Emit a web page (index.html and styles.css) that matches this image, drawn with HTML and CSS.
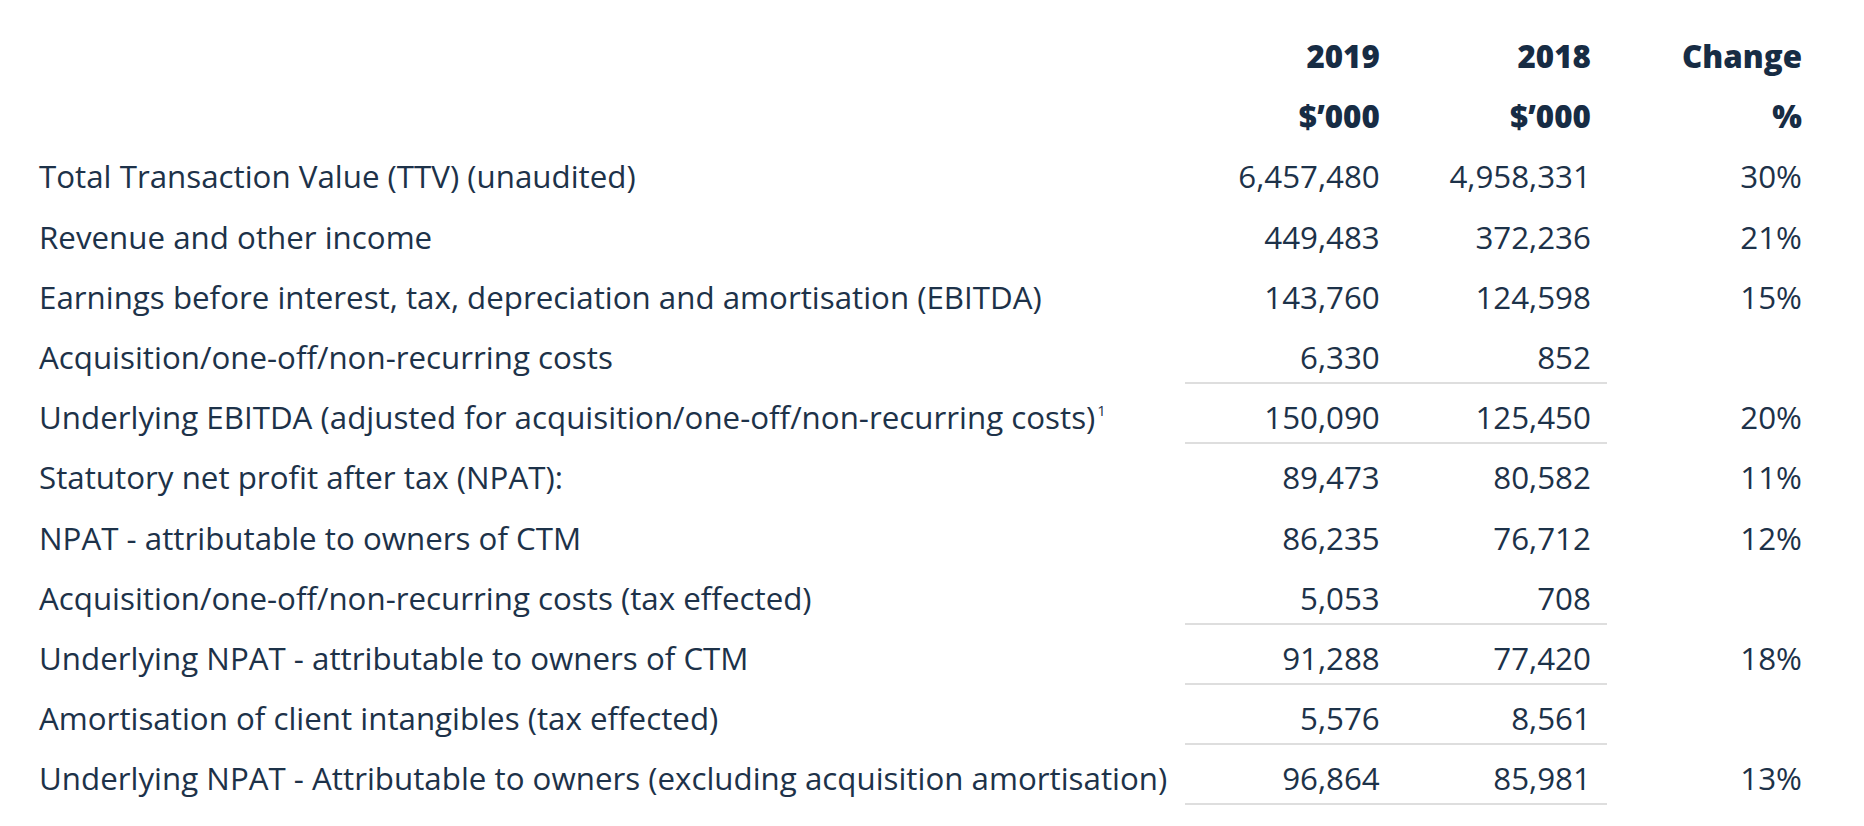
FILE: index.html
```html
<!DOCTYPE html>
<html lang="en">
<head>
<meta charset="utf-8">
<title>Financial results</title>
<link rel="stylesheet" href="styles.css">
</head>
<body>
<div class="page">
  <table class="results">
    <colgroup>
      <col class="c-label">
      <col class="c-num">
      <col class="c-num">
      <col class="c-num">
    </colgroup>
    <thead>
      <tr>
        <th class="label"></th>
        <th class="num">2019</th>
        <th class="num">2018</th>
        <th class="num">Change</th>
      </tr>
      <tr>
        <th class="label"></th>
        <th class="num">$’000</th>
        <th class="num">$’000</th>
        <th class="num">%</th>
      </tr>
    </thead>
    <tbody>
      <tr>
        <td class="label">Total Transaction Value (TTV) (unaudited)</td>
        <td class="num">6,457,480</td>
        <td class="num">4,958,331</td>
        <td class="num">30%</td>
      </tr>
      <tr>
        <td class="label">Revenue and other income</td>
        <td class="num">449,483</td>
        <td class="num">372,236</td>
        <td class="num">21%</td>
      </tr>
      <tr>
        <td class="label">Earnings before interest, tax, depreciation and amortisation (EBITDA)</td>
        <td class="num">143,760</td>
        <td class="num">124,598</td>
        <td class="num">15%</td>
      </tr>
      <tr class="ruled">
        <td class="label">Acquisition/one-off/non-recurring costs</td>
        <td class="num">6,330</td>
        <td class="num">852</td>
        <td class="num"></td>
      </tr>
      <tr class="ruled">
        <td class="label">Underlying EBITDA (adjusted for acquisition/one-off/non-recurring costs)<sup class="note">1</sup></td>
        <td class="num">150,090</td>
        <td class="num">125,450</td>
        <td class="num">20%</td>
      </tr>
      <tr>
        <td class="label">Statutory net profit after tax (NPAT):</td>
        <td class="num">89,473</td>
        <td class="num">80,582</td>
        <td class="num">11%</td>
      </tr>
      <tr>
        <td class="label">NPAT - attributable to owners of CTM</td>
        <td class="num">86,235</td>
        <td class="num">76,712</td>
        <td class="num">12%</td>
      </tr>
      <tr class="ruled">
        <td class="label">Acquisition/one-off/non-recurring costs (tax effected)</td>
        <td class="num">5,053</td>
        <td class="num">708</td>
        <td class="num"></td>
      </tr>
      <tr class="ruled">
        <td class="label">Underlying NPAT - attributable to owners of CTM</td>
        <td class="num">91,288</td>
        <td class="num">77,420</td>
        <td class="num">18%</td>
      </tr>
      <tr class="ruled">
        <td class="label">Amortisation of client intangibles (tax effected)</td>
        <td class="num">5,576</td>
        <td class="num">8,561</td>
        <td class="num"></td>
      </tr>
      <tr class="ruled">
        <td class="label">Underlying NPAT - Attributable to owners (excluding acquisition amortisation)</td>
        <td class="num">96,864</td>
        <td class="num">85,981</td>
        <td class="num">13%</td>
      </tr>
    </tbody>
  </table>
</div>
</body>
</html>
```
FILE: styles.css
```css
html, body {
  margin: 0;
  padding: 0;
  background: #ffffff;
}

body {
  font-family: "Open Sans", "Noto Sans", sans-serif;
  color: #1d3249;
}

.page {
  padding: 23px 0 0 23px;
}

.results {
  table-layout: fixed;
  width: 1795px;
  border-collapse: separate;
  border-spacing: 0;
}

.c-label { width: 1161px; }
.c-num { width: 211px; }

.results th,
.results td {
  height: 60.2px;
  box-sizing: border-box;
  padding: 12px 16px 4px 16px;
  font-size: 31.3px;
  line-height: 42px;
  white-space: nowrap;
  border-bottom: 2px solid transparent;
  vertical-align: top;
}

.results th {
  font-weight: 800;
  color: #172c44;
}

.results td {
  font-weight: 400;
}

.label { text-align: left; }
.num { text-align: right; }

.ruled td.num:nth-child(2),
.ruled td.num:nth-child(3) {
  border-bottom-color: #dedede;
}

.note {
  font-size: 15px;
  line-height: 0;
  vertical-align: 13px;
  margin-left: 2px;
}
```
